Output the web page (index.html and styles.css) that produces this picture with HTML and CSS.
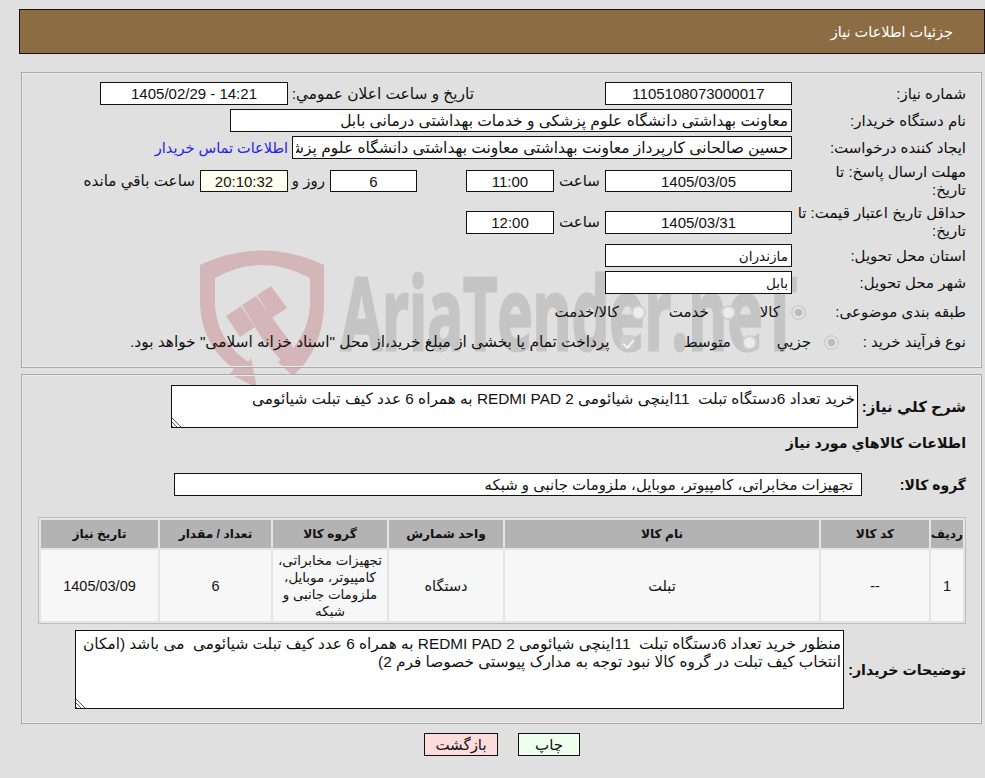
FILE: index.html
```html
<!DOCTYPE html>
<html lang="fa" dir="rtl">
<head>
<meta charset="utf-8">
<title>جزئیات اطلاعات نیاز</title>
<link rel="stylesheet" href="styles.css">
</head>
<body>
<svg class="watermark" viewBox="0 0 985 778" aria-hidden="true">
  <path class="wm-red" fill-rule="evenodd" d="M200 265 Q262 236 324 265 L324 307 Q322 350 293 376 L278 362 Q308 340 310 305 L310 278 Q262 252 215 278 L215 305 Q217 338 243 358 L248 362 L251 358 L257 388 L230 374 L234 369 Q202 345 200 305 Z"/>
  <path class="wm-red" d="M226 316 L241 306 L255 327 L240 337 Z M242 305 L256 296 L291 343 L300 370 L286 366 L263 340 Z M257 295 L271 286 L287 308 L272 318 Z"/>
  <text class="wm-text" x="341" y="350" textLength="456" lengthAdjust="spacingAndGlyphs">AriaTender.neT</text>
</svg>

<header class="title-bar">جزئیات اطلاعات نیاز</header>

<section class="panel panel-top">
  <div class="row row-std">
    <label class="lbl">شماره نیاز:</label>
    <input class="box w187 center" value="1105108073000017" readonly>
    <span class="gap131"></span>
    <label class="lbl-announce">تاریخ و ساعت اعلان عمومي:</label>
    <input class="box w188 center" value="14:21 - 1405/02/29" readonly>
  </div>
  <div class="row row-std">
    <label class="lbl">نام دستگاه خریدار:</label>
    <input class="box w562" value="معاونت بهداشتی دانشگاه علوم پزشکی و خدمات بهداشتی درمانی بابل" readonly>
  </div>
  <div class="row row-std">
    <label class="lbl">ایجاد کننده درخواست:</label>
    <input class="box w500" value="حسین صالحانی کارپرداز معاونت بهداشتی معاونت بهداشتی دانشگاه علوم پزشکی و خدمات بهداشتی" readonly>
    <a class="contact" href="#">اطلاعات تماس خریدار</a>
  </div>
  <div class="row row-tall row-first-tall">
    <label class="lbl">مهلت ارسال پاسخ: تا<br>تاریخ:</label>
    <input class="box w187 center h22" value="1405/03/05" readonly>
    <span class="unit">ساعت</span>
    <input class="box w88 center h22" value="11:00" readonly>
    <span class="gap49"></span>
    <input class="box w87 center h22" value="6" readonly>
    <span class="unit-day">روز و</span>
    <input class="box w88 center h22 remain" value="20:10:32" readonly>
    <span class="unit-rest">ساعت باقي مانده</span>
  </div>
  <div class="row row-tall">
    <label class="lbl">حداقل تاریخ اعتبار قیمت: تا<br>تاریخ:</label>
    <input class="box w187 center" value="1405/03/31" readonly>
    <span class="unit">ساعت</span>
    <input class="box w88 center" value="12:00" readonly>
  </div>
  <div class="row row-std">
    <label class="lbl">استان محل تحویل:</label>
    <input class="box w187 place" value="مازندران" readonly>
  </div>
  <div class="row row-std">
    <label class="lbl">شهر محل تحویل:</label>
    <input class="box w187 place" value="بابل" readonly>
  </div>
  <div class="row row-choice">
    <label class="lbl">طبقه بندی موضوعی:</label>
    <input class="radio r-kala" type="radio" name="cat" checked disabled>
    <span class="opt o-kala">کالا</span>
    <input class="radio r-khedmat" type="radio" name="cat" disabled>
    <span class="opt o-khedmat">خدمت</span>
    <input class="radio r-both" type="radio" name="cat" disabled>
    <span class="opt o-both">کالا/خدمت</span>
  </div>
  <div class="row row-choice">
    <label class="lbl">نوع فرآیند خرید :</label>
    <input class="radio r-jozi" type="radio" name="proc" checked disabled>
    <span class="opt o-jozi">جزيي</span>
    <input class="radio r-mid" type="radio" name="proc" disabled>
    <span class="opt o-mid">متوسط</span>
    <input class="check" type="checkbox" checked disabled>
    <span class="opt o-long">پرداخت تمام یا بخشی از مبلغ خرید،از محل "اسناد خزانه اسلامی" خواهد بود.</span>
  </div>
</section>

<section class="panel panel-bottom">
  <div class="row row-desc">
    <label class="lbl-strong desc-label">شرح کلي نیاز:</label>
    <textarea class="area area-short" readonly>خرید تعداد 6دستگاه تبلت  11اینچی شیائومی REDMI PAD 2 به همراه 6 عدد کیف تبلت شیائومی</textarea>
  </div>
  <h2 class="section-head">اطلاعات کالاهاي مورد نیاز</h2>
  <div class="row row-group">
    <label class="lbl-strong group-label">گروه کالا:</label>
    <input class="box w688 group-input" value="تجهیزات مخابراتی، کامپیوتر، موبایل، ملزومات جانبی و شبکه" readonly>
  </div>
  <table class="goods">
    <colgroup>
      <col class="c1"><col class="c2"><col class="c3"><col class="c4"><col class="c5"><col class="c6"><col class="c7">
    </colgroup>
    <thead>
      <tr><th>ردیف</th><th>کد کالا</th><th>نام کالا</th><th>واحد شمارش</th><th>گروه کالا</th><th>تعداد / مقدار</th><th>تاریخ نیاز</th></tr>
    </thead>
    <tbody>
      <tr>
        <td>1</td><td>--</td><td>تبلت</td><td>دستگاه</td>
        <td class="cell-group">تجهیزات مخابراتی، کامپیوتر، موبایل، ملزومات جانبی و شبکه</td>
        <td>6</td><td>1405/03/09</td>
      </tr>
    </tbody>
  </table>
  <div class="row row-note">
    <label class="lbl-strong note-label">توضیحات خریدار:</label>
    <textarea class="area area-tall" readonly>منظور خرید تعداد 6دستگاه تبلت  11اینچی شیائومی REDMI PAD 2 به همراه 6 عدد کیف تبلت شیائومی  می باشد (امکان انتخاب کیف تبلت در گروه کالا نبود توجه به مدارک پیوستی خصوصا فرم 2)</textarea>
  </div>
</section>

<div class="actions">
  <button class="btn btn-print" type="button">چاپ</button>
  <button class="btn btn-back" type="button">بازگشت</button>
</div>
</body>
</html>
```

FILE: styles.css
```css
* { box-sizing: border-box; }
html, body { margin: 0; padding: 0; }
body {
  position: relative;
  width: 985px;
  height: 778px;
  overflow: hidden;
  background: #e0e0e0;
  color: #111;
  font: 15px/18px "Liberation Sans", "DejaVu Sans", sans-serif;
}
.watermark {
  position: absolute;
  left: 0;
  top: 0;
  width: 985px;
  height: 778px;
  z-index: 0;
  pointer-events: none;
  direction: ltr;
}
.wm-red { fill: #d5b6b8; }
.wm-text {
  fill: #c5c5c5;
  stroke: #c5c5c5;
  stroke-width: 3px;
  font: bold 100px "Open Sans", "Liberation Sans", sans-serif;
  direction: ltr;
}
.title-bar, .panel, .actions { position: relative; z-index: 1; }
.title-bar {
  margin: 9px 0 0 0;
  width: 966px;
  height: 45px;
  padding: 0 31px;
  display: flex;
  align-items: center;
  background: #8c6c42;
  border: 1px solid #111;
  color: #fff;
  font-size: 14.5px;
}
.panel {
  margin-right: 3px;
  width: 961px;
  border: 1px solid #a8a8a8;
  box-shadow: inset 0 0 0 1px #ececec;
}
.panel-top {
  margin-top: 18px;
  height: 296px;
  padding: 9px 15px 0 0;
}
.panel-bottom {
  margin-top: 6px;
  height: 350px;
  padding: 10px 15px 0 0;
}
.row { display: flex; align-items: center; }
.row-std { height: 23px; margin-bottom: 4px; }
.row-tall { height: 36px; margin-bottom: 4px; }
.row-first-tall { margin-bottom: 5px; }
.row-choice { height: 28px; margin-bottom: 2px; }
.lbl { width: 174px; flex: none; white-space: nowrap; }
.box {
  height: 23px;
  flex: none;
  border: 1px solid #111;
  background: #fff;
  color: #111;
  font: inherit;
  font-size: 15.5px;
  padding: 0 3px;
  direction: rtl;
  text-align: right;
  outline: none;
}
.center { text-align: center; font-size: 15px; }
.place { font-size: 13.6px; }
.h22 { height: 22px; }
.remain { background: #ffffee; }
.w187 { width: 187px; }
.w188 { width: 188px; }
.w562 { width: 562px; }
.w500 { width: 500px; }
.w88 { width: 88px; }
.w87 { width: 87px; }
.w688 { width: 688px; }
.gap131 { width: 131px; flex: none; }
.gap49 { width: 49px; flex: none; }
.lbl-announce { width: 186px; flex: none; font-size: 15.4px; white-space: nowrap; }
.contact { margin-right: 4px; color: #2222ee; text-decoration: none; white-space: nowrap; font-size: 14.5px; }
.unit { width: 51px; flex: none; text-align: center; }
.unit-day { width: 42px; flex: none; padding-right: 5px; }
.unit-rest { margin-right: 5px; white-space: nowrap; font-size: 15.2px; }
.radio, .check {
  appearance: none;
  flex: none;
  margin: 0;
  background: #ececec;
  border: 2px solid #cfcfcf;
}
.radio {
  width: 15px;
  height: 15px;
  border-radius: 50%;
}
.radio:checked { background: radial-gradient(circle, #bdbdbd 0 3.5px, #ececec 4.5px); }
.check {
  position: relative;
  width: 14px;
  height: 14px;
  border-radius: 2px;
  border-color: #cdcdcd;
  background: #cdcdcd;
  margin-right: 50px;
}
.check::after {
  content: "";
  position: absolute;
  left: 3px;
  top: 0;
  width: 5px;
  height: 9px;
  border: solid #f2f2f2;
  border-width: 0 2px 2px 0;
  transform: rotate(40deg);
}
.opt { white-space: nowrap; font-size: 15px; }
.r-kala { margin-right: -14px; }
.o-kala { margin-right: 11px; }
.r-khedmat { margin-right: 24px; }
.o-khedmat { margin-right: 12px; }
.r-both { margin-right: 23px; }
.o-both { margin-right: 12px; }
.r-jozi { margin-right: -47px; }
.o-jozi { margin-right: 13px; }
.r-mid { margin-right: 20px; }
.o-mid { margin-right: 11px; }
.o-long { margin-right: 10px; font-size: 15.4px; }
.lbl-strong { font-weight: bold; flex: none; white-space: nowrap; }
.row-desc { height: 43px; }
.desc-label { width: 108px; }
.area {
  flex: none;
  display: block;
  border: 1px solid #111;
  background: #fff;
  color: #111;
  font: inherit;
  font-size: 15.35px;
  padding: 4px 2px 2px;
  margin: 0;
  outline: none;
  resize: both;
}
.area::-webkit-resizer {
  background:
    linear-gradient(to top right, transparent 55%, #fff 55%) left bottom / 10px 10px no-repeat,
    repeating-linear-gradient(45deg, #555 0 1px, #fff 1px 3px) left bottom / 10px 10px no-repeat;
}
.area-short { width: 687px; height: 43px; }
.section-head {
  margin: 0;
  height: 30px;
  padding-top: 6px;
  font-size: 14.2px;
  line-height: 18px;
  font-weight: bold;
}
.row-group { height: 23px; margin-top: 15px; }
.group-label { width: 104px; font-size: 14px; }
.group-input { padding-right: 8px; font-size: 14.9px; }
.goods {
  width: 928px;
  margin-top: 21px;
  table-layout: fixed;
  border: 1px solid #bdbdbd;
  border-spacing: 2px;
  background: #e4e4e4;
  font-size: 14.5px;
}
.c1 { width: 32px; }
.c2 { width: 108px; }
.c3 { width: 314px; }
.c4 { width: 114px; }
.c5 { width: 114px; }
.c6 { width: 111px; }
.c7 { width: 117px; }
.goods th {
  height: 28px;
  padding: 0;
  background: #b3b3b3;
  font-size: 12.2px;
  font-weight: bold;
}
.goods td {
  height: 71px;
  padding: 0;
  background: #f7f7f7;
  text-align: center;
  vertical-align: middle;
}
.goods .cell-group { line-height: 17px; padding: 0 3px; font-size: 13.4px; }
.row-note { height: 79px; margin-top: 6px; }
.note-label { width: 122px; font-size: 14.2px; }
.area-tall { width: 769px; height: 79px; }
.actions {
  margin-top: 9px;
  display: flex;
  justify-content: center;
  gap: 20px;
  width: 966px;
}
.btn {
  height: 23px;
  border: 1px solid #111;
  color: #111;
  font: inherit;
  padding: 0;
}
.btn-print { width: 62px; background: #eeffee; }
.btn-back { width: 74px; background: #ffdcdc; }
```
